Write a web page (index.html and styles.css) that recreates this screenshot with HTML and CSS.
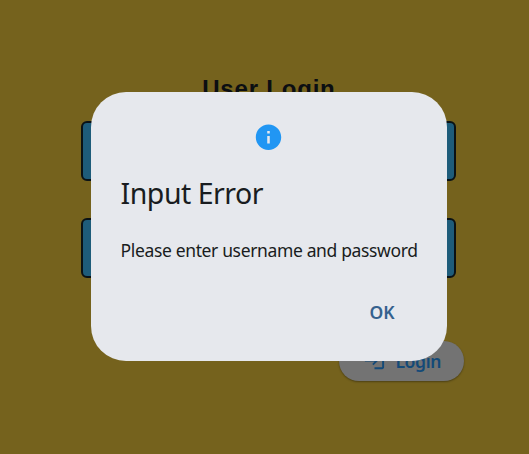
FILE: index.html
```html
<!DOCTYPE html>
<html lang="en">
<head>
<meta charset="utf-8">
<title>User Login</title>
<link rel="stylesheet" href="styles.css">
</head>
<body>
<main class="login">
  <h1 class="heading">User Login</h1>
  <div class="field"></div>
  <div class="field"></div>
  <button class="submit">
    <svg class="submit-icon" viewBox="0 0 24 24"><path fill="currentColor" d="M11 7 9.600 8.400 12.200 11H2v2h10.200l-2.600 2.600L11 17l5-5-5-5zm9 12h-8v2h8c1.100 0 2-.9 2-2V5c0-1.100-.9-2-2-2h-8v2h8v14z"/></svg>
    <span class="submit-label">Login</span>
  </button>
</main>
<div class="overlay">
  <section class="dialog" role="alertdialog">
    <svg class="info" viewBox="0 0 24 24"><path fill="#2196f3" d="M12 2C6.480 2 2 6.480 2 12s4.480 10 10 10 10-4.480 10-10S17.520 2 12 2zm1 15h-2v-6h2v6zm0-8h-2V7h2v2z"/></svg>
    <h2 class="title">Input Error</h2>
    <p class="message">Please enter username and password</p>
    <button class="ok">OK</button>
  </section>
</div>
</body>
</html>
```
FILE: styles.css
```css
* { box-sizing: border-box; margin: 0; }
body {
  width: 529px;
  height: 454px;
  overflow: hidden;
  background: #75621d;
  font-family: "Noto Sans", sans-serif;
}
button { border: 0; padding: 0; font-family: inherit; }
.login {
  display: flex;
  flex-direction: column;
  width: 375px;
  margin-left: 81.400px;
  padding-top: 74px;
}
.heading {
  height: 47px;
  text-align: center;
  font: bold 24px/30px "Liberation Sans", sans-serif;
  letter-spacing: 0.8px;
  color: #0b0e12;
}
.field {
  height: 60px;
  margin-bottom: 37.400px;
  border: 2px solid #0a1216;
  border-radius: 6px;
  background: #1e5c7a;
}
.submit {
  display: flex;
  align-items: center;
  align-self: flex-end;
  width: 125px;
  height: 40px;
  margin: 25.200px -8px 0 0;
  padding-left: 24px;
  gap: 9px;
  border-radius: 20px;
  background: #737373;
  color: #144a78;
  box-shadow: 0 1px 2px rgba(0, 0, 0, 0.35);
}
.submit-icon { width: 23px; height: 23px; }
.submit-label {
  font-size: 17.500px;
  font-weight: 600;
  line-height: 24px;
  letter-spacing: -0.35px;
}
.overlay {
  position: absolute;
  inset: 0;
  display: flex;
  padding: 91.500px 0 0 90.600px;
}
.dialog {
  display: flex;
  flex-direction: column;
  width: 356.400px;
  height: 269.900px;
  padding: 30px;
  border-radius: 35px;
  background: #e6e8ed;
  color: #191c20;
}
.info { width: 31px; height: 31px; align-self: center; }
.title {
  margin-top: 21px;
  font-size: 28.500px;
  line-height: 40px;
  font-weight: 400;
  letter-spacing: -0.500px;
  white-space: nowrap;
}
.message {
  margin-top: 24px;
  font-size: 17.500px;
  line-height: 26px;
  font-weight: 400;
  letter-spacing: -0.360px;
  white-space: nowrap;
}
.ok {
  align-self: flex-end;
  width: 70px;
  height: 40px;
  margin-top: 29px;
  background: none;
  color: #35618e;
  font-size: 17.500px;
  font-weight: 600;
}
```
